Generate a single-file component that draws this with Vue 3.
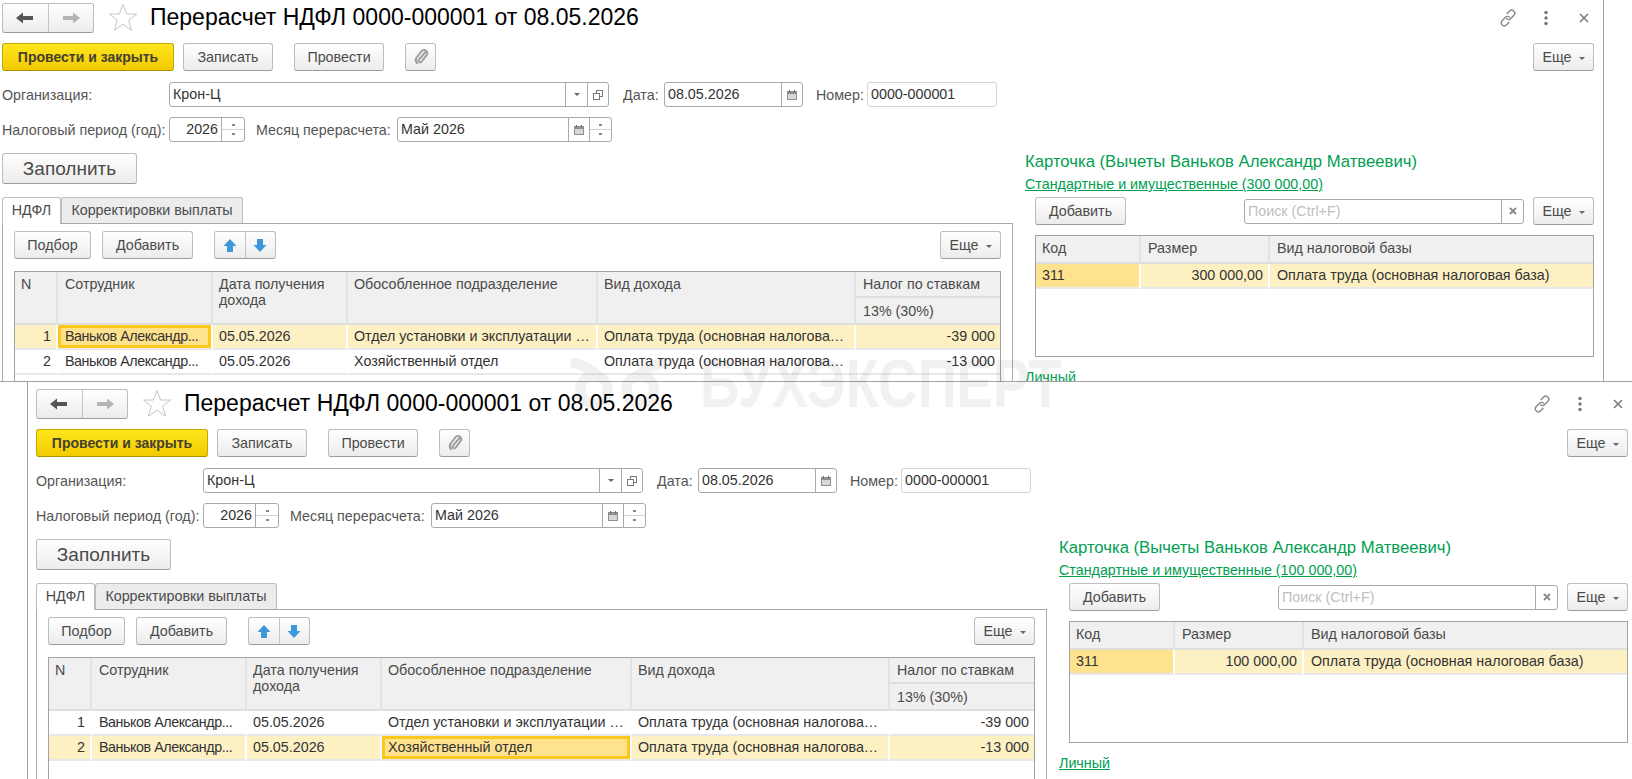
<template>
  <div class="desk">
    <section
      v-for="doc in docs"
      :key="doc.id"
      class="win"
      :class="doc.id"
    >
      <!-- Header -->
      <header class="head">
        <div class="btn-group nav">
          <button class="seg seg-nav">
            <svg width="20" height="14" viewBox="0 0 20 14"><path d="M1 7 8 1.5V5h10v4H8v3.5z" fill="#555" /></svg>
          </button>
          <button class="seg seg-nav">
            <svg width="20" height="14" viewBox="0 0 20 14"><path d="M19 7 12 1.5V5H2v4h10v3.5z" fill="#b4b4b4" /></svg>
          </button>
        </div>
        <svg class="star" width="30" height="29" viewBox="0 0 30 29">
          <path d="M15 1.5 18.6 11H28.6L20.6 17.2 23.6 27.2 15 21.2 6.4 27.2 9.4 17.2 1.4 11H11.4z" fill="#fff" stroke="#c6c6c6" />
        </svg>
        <h1 class="title">Перерасчет НДФЛ 0000-000001 от 08.05.2026</h1>
        <div class="head-tools">
          <svg width="20" height="20" viewBox="0 0 22 22" fill="none" stroke="#8a8a8a" stroke-width="1.6">
            <path d="M9.5 6.5 12.5 3.5a3.2 3.2 0 0 1 5 4.5l-4 4a3 3 0 0 1-4.5-.5" />
            <path d="M12.5 15.5 9.5 18.5a3.2 3.2 0 0 1-5-4.5l4-4a3 3 0 0 1 4.5.5" />
          </svg>
          <svg class="tool-dots" width="6" height="16" viewBox="0 0 6 16" fill="#777"><circle cx="3" cy="2.5" r="1.7" /><circle cx="3" cy="8" r="1.7" /><circle cx="3" cy="13.5" r="1.7" /></svg>
          <svg class="tool-close" width="10" height="10" viewBox="0 0 10 10" stroke="#777" stroke-width="1.5"><path d="M1 1 9 9M9 1 1 9" /></svg>
        </div>
      </header>

      <!-- Command bar -->
      <div class="cmd">
        <button class="btn primary w-post-close">Провести и закрыть</button>
        <button class="btn w-write">Записать</button>
        <button class="btn w-post wide-gap">Провести</button>
        <button class="btn w-clip wide-gap">
          <svg width="16" height="18" viewBox="0 0 16 18" fill="none" stroke="#a0a0a0" stroke-width="2" stroke-linecap="round">
            <path d="M12.5 5 6 12.5a1.7 1.7 0 0 0 2.6 2.2l5-6.5a3.2 3.2 0 0 0-5-4l-5.3 6.6a4.6 4.6 0 0 0 .8 5.4" />
          </svg>
        </button>
        <button class="btn w-more more-end">Еще <i class="caret"></i></button>
      </div>

      <!-- Requisites -->
      <div class="form-row">
        <span class="label w-org-label">Организация:</span>
        <div class="field w-org">
          <span class="val">Крон-Ц</span>
          <span class="cell w-cell-a"><i class="caret"></i></span>
          <span class="cell w-cell-b">
            <svg width="12" height="12" viewBox="0 0 12 12" fill="#fff" stroke="#777"><rect x="4.5" y="1.5" width="6" height="6" /><rect x="1.5" y="4.5" width="6" height="6" /></svg>
          </span>
        </div>
        <span class="label gap-date">Дата:</span>
        <div class="field w-date">
          <span class="val">08.05.2026</span>
          <span class="cell w-cell-b"><svg width="12" height="12" viewBox="0 0 12 12"><rect x="1" y="2" width="10" height="9" fill="#8f8f8f" /><rect x="2" y="5" width="8" height="5" fill="#d8d8d8" /><path d="M3.500 1v2M8.500 1v2" stroke="#666" /></svg></span>
        </div>
        <span class="label gap-num">Номер:</span>
        <div class="field w-num field-light"><span class="val">0000-000001</span></div>
      </div>

      <div class="form-row row-2">
        <span class="label w-org-label">Налоговый период (год):</span>
        <div class="field w-year">
          <span class="val val-right">2026</span>
          <span class="cell cell-spin"><i class="tick up"></i><i class="tick down"></i></span>
        </div>
        <span class="label gap-month">Месяц перерасчета:</span>
        <div class="field w-month">
          <span class="val">Май 2026</span>
          <span class="cell w-cell-b"><svg width="12" height="12" viewBox="0 0 12 12"><rect x="1" y="2" width="10" height="9" fill="#8f8f8f" /><rect x="2" y="5" width="8" height="5" fill="#d8d8d8" /><path d="M3.500 1v2M8.500 1v2" stroke="#666" /></svg></span>
          <span class="cell cell-spin w-cell-spin"><i class="tick up"></i><i class="tick down"></i></span>
        </div>
      </div>

      <div class="body">
        <!-- Left: tabs and table -->
        <div class="left">
          <button class="btn btn-fill">Заполнить</button>
          <div class="tabs">
            <span class="tab active">НДФЛ</span>
            <span class="tab">Корректировки выплаты</span>
          </div>
          <div class="pane">
            <div class="pane-tools">
              <button class="btn w-pick">Подбор</button>
              <button class="btn w-add">Добавить</button>
              <div class="btn-group arrows">
                <button class="seg seg-arrow">
                  <svg width="14" height="15" viewBox="0 0 14 15"><path d="M7 1 13.500 8H10v6H4V8H.5z" fill="#3c98d8" /></svg>
                </button>
                <button class="seg seg-arrow">
                  <svg width="14" height="15" viewBox="0 0 14 15"><path d="M7 14 .5 7H4V1h6v6h3.500z" fill="#3c98d8" /></svg>
                </button>
              </div>
              <button class="btn w-more more-end">Еще <i class="caret"></i></button>
            </div>
            <div class="grid-box grid-main">
              <table class="grid">
                <colgroup>
                  <col class="c-n" /><col class="c-emp" /><col class="c-date" /><col class="c-sub" /><col class="c-kind" /><col class="c-tax" />
                </colgroup>
                <thead>
                  <tr class="h-a">
                    <th rowspan="2">N</th>
                    <th rowspan="2">Сотрудник</th>
                    <th rowspan="2">Дата получения дохода</th>
                    <th rowspan="2">Обособленное подразделение</th>
                    <th rowspan="2">Вид дохода</th>
                    <th>Налог по ставкам</th>
                  </tr>
                  <tr class="h-b"><th>13% (30%)</th></tr>
                </thead>
                <tbody>
                  <tr v-for="(r, i) in rows" :key="r.n" :class="{ sel: doc.activeRow === i }">
                    <td class="num">{{ r.n }}</td>
                    <td class="emp" :class="{ focus: doc.activeRow === i && doc.activeCol === 'emp' }">{{ r.emp }}</td>
                    <td>{{ r.date }}</td>
                    <td :class="{ focus: doc.activeRow === i && doc.activeCol === 'sub' }">{{ r.sub }}</td>
                    <td class="kind">{{ r.kind }}</td>
                    <td class="num">{{ r.tax }}</td>
                  </tr>
                </tbody>
              </table>
            </div>
          </div>
        </div>

        <!-- Right: deductions card -->
        <aside class="card">
          <div class="card-title">Карточка (Вычеты Ваньков Александр Матвеевич)</div>
          <a class="link">Стандартные и имущественные ({{ doc.amount }})</a>
          <div class="card-inner">
            <div class="card-tools">
              <button class="btn w-add">Добавить</button>
              <div class="field w-search">
                <span class="val placeholder">Поиск (Ctrl+F)</span>
                <span class="cell w-cell-x">
                  <svg width="8" height="8" viewBox="0 0 8 8" stroke="#888" stroke-width="1.800"><path d="M1 1 7 7M7 1 1 7" /></svg>
                </span>
              </div>
              <button class="btn w-more">Еще <i class="caret"></i></button>
            </div>
            <div class="grid-box grid-card">
              <table class="grid">
                <colgroup><col class="c-code" /><col class="c-size" /><col /></colgroup>
                <thead>
                  <tr class="h-c"><th>Код</th><th>Размер</th><th>Вид налоговой базы</th></tr>
                </thead>
                <tbody>
                  <tr class="sel">
                    <td class="soft">311</td>
                    <td class="num">{{ doc.amount }}</td>
                    <td>Оплата труда (основная налоговая база)</td>
                  </tr>
                </tbody>
              </table>
            </div>
          </div>
          <a class="link personal">Личный</a>
        </aside>
      </div>
    </section>

    <!-- Watermark over both windows -->
    <div class="mark">
      <svg width="100" height="52" viewBox="0 0 108 52" fill="none" stroke="#000" stroke-width="11">
        <circle cx="28" cy="32" r="15" />
        <circle cx="78" cy="32" r="15" />
        <path d="M3 3c14 2 25 8 32 18M105 3C91 5 80 11 73 21" />
      </svg>
      <span class="mark-text">БУХЭКСПЕРТ</span>
    </div>
  </div>
</template>

<script setup>
const docs = [
  { id: 'win-back', amount: '300 000,00', activeRow: 0, activeCol: 'emp' },
  { id: 'win-front', amount: '100 000,00', activeRow: 1, activeCol: 'sub' }
]

const rows = [
  {
    n: 1,
    emp: 'Ваньков Александр...',
    date: '05.05.2026',
    sub: 'Отдел установки и эксплуатации оборудования',
    kind: 'Оплата труда (основная налоговая база)',
    tax: '-39 000'
  },
  {
    n: 2,
    emp: 'Ваньков Александр...',
    date: '05.05.2026',
    sub: 'Хозяйственный отдел',
    kind: 'Оплата труда (основная налоговая база)',
    tax: '-13 000'
  }
]
</script>

<style>
html, body { background: #fff; }
</style>

<style scoped>
.desk {
  position: relative;
  width: 1632px;
  height: 779px;
  overflow: hidden;
  background: #fff;
  font: 14.3px "Liberation Sans", Arial, sans-serif;
  color: #4b4b4b;
}

/* Windows */
.win {
  position: absolute;
  box-sizing: border-box;
  width: 1611px;
  padding: 7px 0 0 8px;
  border: 1px solid #a3a3a3;
  background: #fff;
  overflow: hidden;
}
.win-back { left: -7px; top: -5px; height: 387px; }
.win-front { left: 27px; top: 381px; height: 420px; }

/* Header */
.head { display: flex; align-items: center; height: 29px; }
.btn-group {
  display: flex;
  box-sizing: border-box;
  border: 1px solid #bdbdbd;
  border-bottom-color: #9c9c9c;
  border-radius: 3px;
  background: linear-gradient(#fff, #ececec);
}
.seg {
  display: flex;
  align-items: center;
  justify-content: center;
  padding: 0;
  border: 0;
  background: none;
}
.seg + .seg { border-left: 1px solid #c4c4c4; }
.nav { width: 92px; height: 30px; }
.seg-nav { flex: 1; }
.star { margin-left: 14px; }
.title {
  margin: 0 0 0 12px;
  font-size: 23px;
  font-weight: 400;
  color: #000;
  white-space: nowrap;
}
.head-tools {
  display: flex;
  align-items: center;
  margin-left: auto;
  margin-right: 14px;
}
.tool-dots { margin-left: 25px; }
.tool-close { margin-left: 30px; }

/* Buttons */
.btn {
  box-sizing: border-box;
  height: 28px;
  padding: 0;
  border: 1px solid #bdbdbd;
  border-bottom-color: #9c9c9c;
  border-radius: 3px;
  background: linear-gradient(#fff, #ececec);
  font: inherit;
  color: #4b4b4b;
  white-space: nowrap;
}
.primary {
  border-color: #c4a800;
  border-bottom-color: #a99000;
  background: linear-gradient(#ffe61e, #f2cb00);
  font-size: 14px;
  font-weight: 700;
  color: #454030;
}
.w-post-close { width: 172px; }
.w-write { width: 90px; }
.w-post { width: 90px; }
.w-clip { width: 31px; }
.w-more { width: 61px; }
.w-pick { width: 77px; }
.w-add { width: 91px; }
.wide-gap { margin-left: 12px; }
.more-end { margin-left: auto; }
.caret {
  display: inline-block;
  width: 0;
  height: 0;
  margin-left: 3px;
  vertical-align: 2px;
  border: 3px solid transparent;
  border-top: 3px solid #666;
  border-bottom: 0;
}

.cmd {
  display: flex;
  gap: 9px;
  margin-top: 11px;
  padding-right: 9px;
}

/* Form rows */
.form-row {
  display: flex;
  align-items: center;
  height: 25px;
  margin-top: 11px;
}
.row-2 { margin-top: 10px; }
.label { white-space: nowrap; color: #555; }
.w-org-label { width: 167px; }
.gap-date { width: 41px; margin-left: 14px; }
.gap-num { width: 51px; margin-left: 13px; }
.gap-month { width: 141px; margin-left: 11px; }
.field {
  display: flex;
  box-sizing: border-box;
  height: 25px;
  border: 1px solid #a9a9a9;
  border-radius: 3px;
  background: #fff;
  overflow: hidden;
}
.field-light { border-color: #d4d4d4; }
.val {
  flex: 1;
  min-width: 0;
  padding: 0 3px;
  line-height: 23px;
  color: #333;
  white-space: nowrap;
}
.val-right { text-align: right; }
.placeholder { color: #c0c0c0; }
.cell {
  display: flex;
  align-items: center;
  justify-content: center;
  box-sizing: border-box;
  border-left: 1px solid #a9a9a9;
}
.cell .caret { margin: 0; }
.w-org { width: 440px; }
.w-date { width: 139px; }
.w-num { width: 130px; }
.w-year { width: 76px; }
.w-month { width: 215px; }
.w-search { width: 280px; height: 25px; margin-left: auto; }
.w-cell-a { width: 22px; }
.w-cell-b { width: 21px; }
.w-cell-x { width: 22px; }
.cell-spin {
  flex-direction: column;
  justify-content: space-evenly;
  width: 23px;
  background: linear-gradient(transparent 11px, #d4d4d4 11px, #d4d4d4 12px, transparent 12px);
}
.w-cell-spin { width: 22px; }
.tick { width: 3px; height: 2px; background: #888; }

/* Body */
.body {
  display: flex;
  gap: 12px;
  margin-top: 11px;
}
.left { width: 1011px; flex: none; }
.btn-fill {
  display: block;
  width: 135px;
  height: 31px;
  font-size: 19px;
}
.tabs {
  display: flex;
  align-items: flex-end;
  height: 26px;
  margin-top: 13px;
}
.tab {
  box-sizing: border-box;
  width: 182px;
  height: 26px;
  border: 1px solid #bdbdbd;
  border-bottom: 0;
  border-radius: 3px 3px 0 0;
  background: #ececec;
  line-height: 25px;
  text-align: center;
  white-space: nowrap;
}
.tab.active {
  position: relative;
  z-index: 1;
  width: 59px;
  height: 27px;
  margin-bottom: -1px;
  background: #fff;
}
.pane {
  box-sizing: border-box;
  height: 300px;
  padding: 7px 11px 8px;
  border: 1px solid #a9a9a9;
}
.pane-tools { display: flex; gap: 11px; }
.arrows { width: 62px; height: 28px; margin-left: 10px; }
.seg-arrow { flex: 1; }

/* Tables */
.grid-box {
  box-sizing: border-box;
  border: 1px solid #a3a3a3;
  overflow: hidden;
}
.grid-main { height: 200px; margin-top: 12px; }
.grid {
  width: 100%;
  table-layout: fixed;
  border-collapse: separate;
  border-spacing: 0;
}
.c-n { width: 43px; }
.c-emp { width: 155px; }
.c-date { width: 135px; }
.c-sub { width: 250px; }
.c-kind { width: 258px; }
.c-tax { width: 144px; }
.c-code { width: 105px; }
.c-size { width: 129px; }
.grid th {
  box-sizing: border-box;
  padding: 3px 5px 3px 7px;
  border-right: 2px solid #e2e2e2;
  border-bottom: 2px solid #dedede;
  background: #f0f0f0;
  font-weight: 400;
  line-height: 16px;
  text-align: left;
  vertical-align: top;
  color: #4b4b4b;
}
.grid th:first-child { padding-left: 6px; }
.grid th:last-child { border-right: 0; }
.grid-main .h-a th:nth-child(n+3) { padding-left: 6px; }
.grid-main .h-a th:last-child,
.grid-main .h-b th { padding-left: 7px; }
.h-a th { height: 26px; padding-top: 4px; }
.h-b th { height: 27px; padding-top: 5px; }
.h-c th { height: 28px; padding-top: 4px; }
.grid td {
  box-sizing: border-box;
  height: 25px;
  padding: 0 2px 0 7px;
  border-right: 2px solid #fff;
  border-bottom: 2px solid #e7e7ec;
  line-height: 23px;
  color: #333;
  white-space: nowrap;
  overflow: hidden;
  text-overflow: ellipsis;
}
.grid td:first-child { padding-left: 6px; }
.grid td:last-child { border-right: 0; }
.grid-main td:nth-child(n+3) { padding-left: 6px; }
.grid td.num { padding-right: 5px; text-align: right; }
.grid td.emp { letter-spacing: -0.45px; text-overflow: clip; }
.grid td.kind { padding-right: 9px; }
.grid tr.sel td { background: #fdf1c4; }
.grid tr.sel td.soft { background: #fee28e; }
.grid tr.sel td.focus {
  background: #fee28e;
  box-shadow: inset 0 0 0 3px #fcc81e;
}

/* Card */
.card { width: 569px; flex: none; }
.card-title {
  height: 20px;
  margin-top: -1px;
  font-size: 16.7px;
  line-height: 20px;
  color: #00a050;
  white-space: nowrap;
}
.link {
  display: block;
  width: max-content;
  margin-top: 5px;
  color: #00a050;
  line-height: 15px;
  text-decoration: underline;
}
.card-inner { margin: 5px 0 0 10px; }
.card-tools { display: flex; align-items: center; gap: 9px; }
.grid-card { height: 122px; margin-top: 10px; }
.personal { margin-top: 13px; }

/* Watermark */
.mark {
  position: absolute;
  left: 568px;
  top: 358px;
  display: flex;
  align-items: center;
  gap: 32px;
  opacity: 0.05;
  pointer-events: none;
}
.mark-text {
  font-size: 69px;
  font-weight: 700;
  line-height: 52px;
  color: #000;
  white-space: nowrap;
  transform: scaleX(0.79);
  transform-origin: left center;
}
</style>
